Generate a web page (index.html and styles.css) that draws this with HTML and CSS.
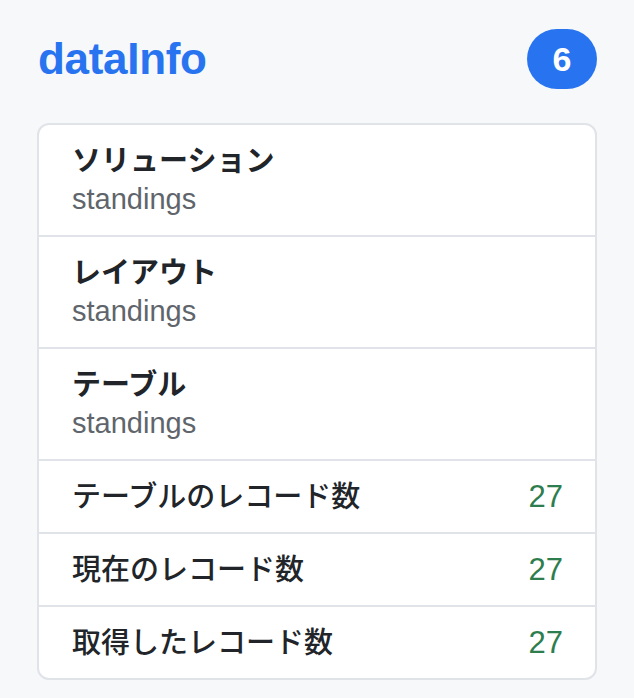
FILE: index.html
```html
<!DOCTYPE html>
<html lang="ja">
<head>
<meta charset="utf-8">
<title>dataInfo</title>
<link rel="stylesheet" href="styles.css">
</head>
<body>
<div class="page">
  <div class="header">
    <h1 class="title">dataInfo</h1>
    <span class="badge">6</span>
  </div>
  <ul class="list">
    <li class="item tall">
      <div class="label">ソリューション</div>
      <div class="sub">standings</div>
    </li>
    <li class="item tall">
      <div class="label">レイアウト</div>
      <div class="sub">standings</div>
    </li>
    <li class="item tall">
      <div class="label">テーブル</div>
      <div class="sub">standings</div>
    </li>
    <li class="item short">
      <span class="label">テーブルのレコード数</span>
      <span class="value">27</span>
    </li>
    <li class="item short">
      <span class="label">現在のレコード数</span>
      <span class="value">27</span>
    </li>
    <li class="item short">
      <span class="label">取得したレコード数</span>
      <span class="value">27</span>
    </li>
  </ul>
</div>
</body>
</html>
```
FILE: styles.css
```css
html, body {
  margin: 0;
  padding: 0;
  background: #f7f8fa;
}
body {
  font-family: "Liberation Sans", "Noto Sans CJK JP", sans-serif;
  color: #212529;
}
.page {
  padding: 29px 37px 0 37px;
}
.header {
  display: flex;
  align-items: center;
  justify-content: space-between;
  margin-bottom: 34px;
}
.title {
  margin: 0 0 0 1px;
  font-size: 44px;
  line-height: 60px;
  font-weight: 700;
  color: #2874f0;
  letter-spacing: -0.3px;
}
.badge {
  display: inline-flex;
  align-items: center;
  justify-content: center;
  width: 70px;
  height: 60px;
  border-radius: 30px;
  background: #2874f0;
  color: #fff;
  font-size: 34px;
  font-weight: 700;
}
.list {
  list-style: none;
  margin: 0;
  padding: 0;
  background: #fff;
  border: 2px solid #e0e3e7;
  border-radius: 12px;
  overflow: hidden;
}
.item {
  padding: 17px 32px 17px 33px;
  font-size: 29px;
  line-height: 38px;
}
.item + .item {
  border-top: 2px solid #e0e3e7;
}
.tall .label {
  font-weight: 700;
}
.sub {
  color: #60656b;
}
.short {
  display: flex;
  justify-content: space-between;
  align-items: center;
  padding-top: 16.5px;
  padding-bottom: 16.5px;
}
.short .label {
  font-weight: 500;
}
.value {
  color: #2e7d4e;
  font-size: 31px;
}
```
